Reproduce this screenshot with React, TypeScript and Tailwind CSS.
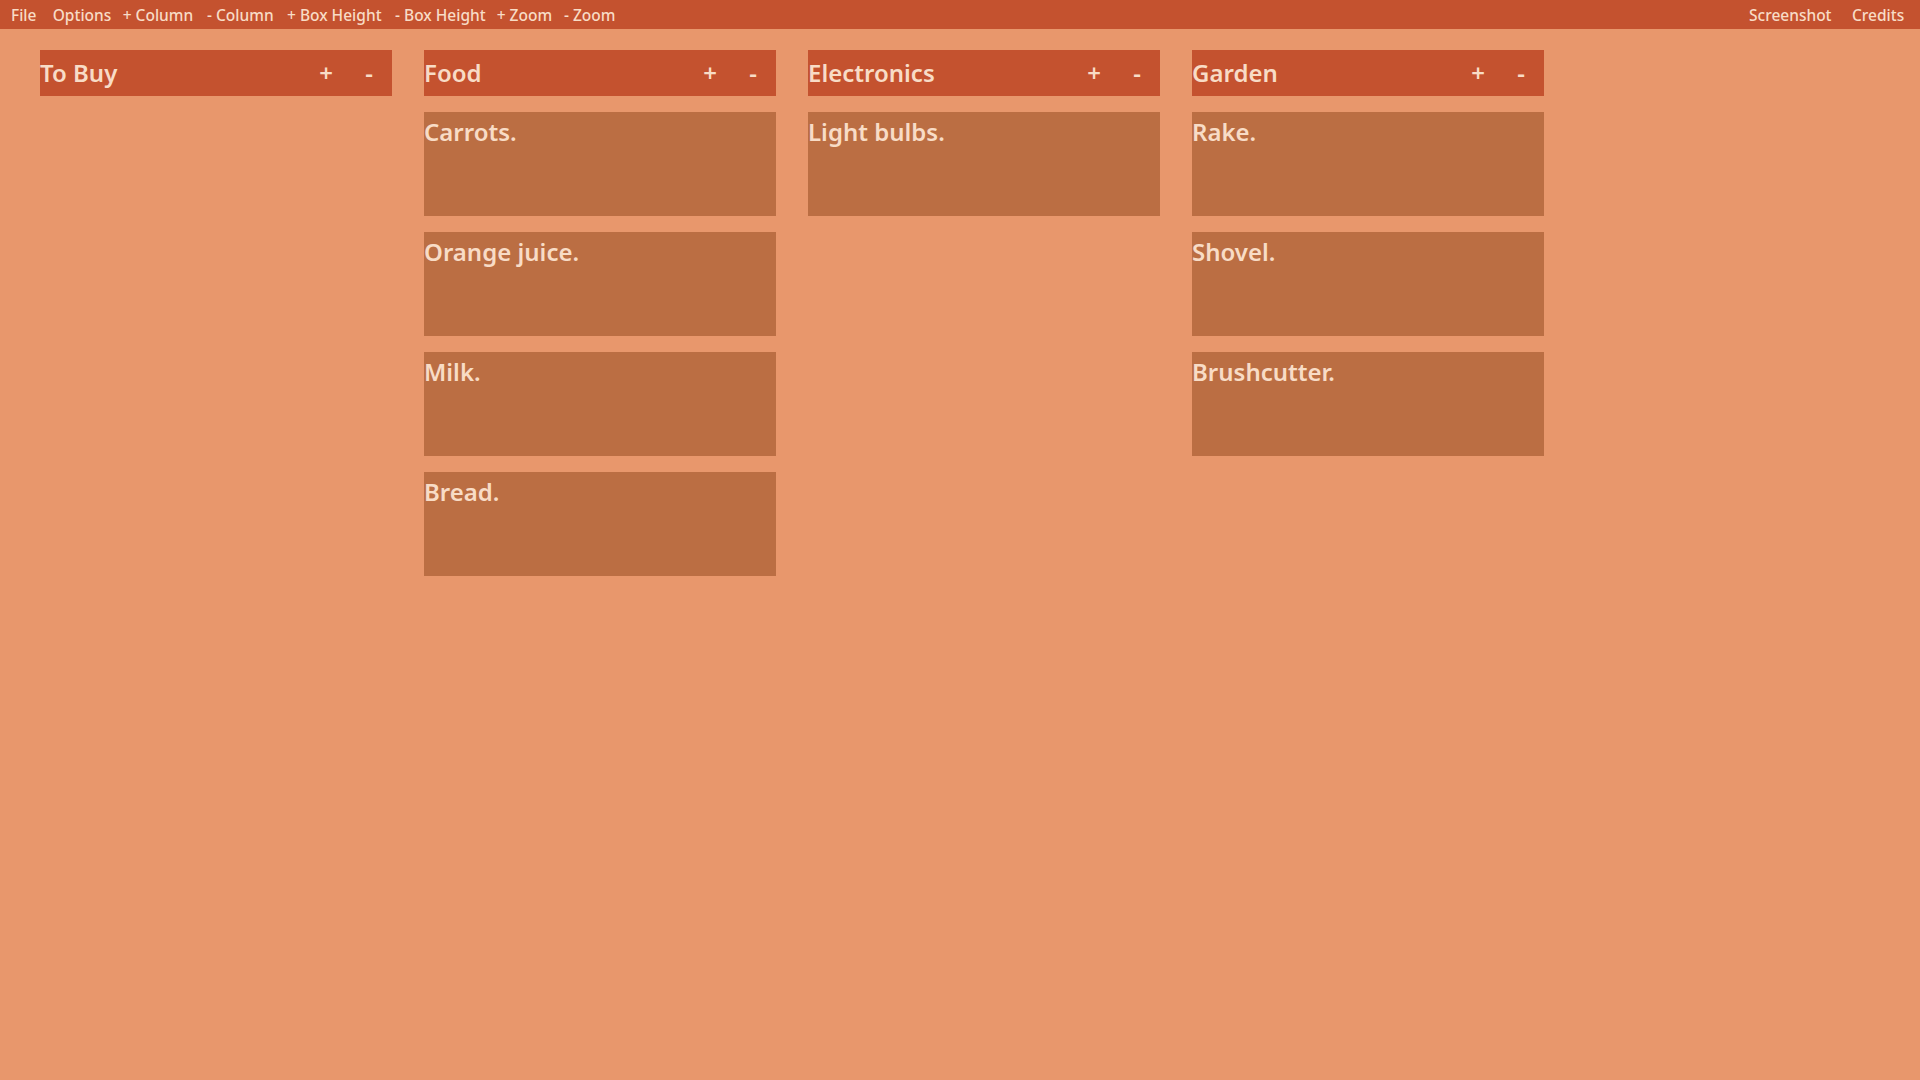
import React from "react";

const font = { fontFamily: '"Noto Sans", "Open Sans", sans-serif' };

const columns: { title: string; items: string[] }[] = [
  { title: "To Buy", items: [] },
  { title: "Food", items: ["Carrots.", "Orange juice.", "Milk.", "Bread."] },
  { title: "Electronics", items: ["Light bulbs."] },
  { title: "Garden", items: ["Rake.", "Shovel.", "Brushcutter."] },
];

export default function App() {
  return (
    <div
      className="w-[1920px] h-[1080px] bg-[#e8976c] text-[#f8dcc6] overflow-hidden flex flex-col font-semibold"
      style={font}
    >
      <div className="h-[29px] pt-[2px] bg-[#c4522f] flex items-center justify-between text-[15.5px] font-medium shrink-0">
        <div className="flex items-center pl-[11px]">
          <span className="w-[41.7px]">File</span>
          <span className="w-[70px]">Options</span>
          <span className="w-[84.3px]">+ Column</span>
          <span className="w-[80px]">- Column</span>
          <span className="w-[108px]">+ Box Height</span>
          <span className="w-[101.7px]">- Box Height</span>
          <span className="w-[67.3px]">+ Zoom</span>
          <span>- Zoom</span>
        </div>
        <div className="flex items-center">
          <span className="w-[103px]">Screenshot</span>
          <span className="w-[68px]">Credits</span>
        </div>
      </div>
      <div className="flex items-start gap-[32px] pl-[40px] pt-[21px]">
        {columns.map((col) => (
          <div key={col.title} className="w-[352px] flex flex-col gap-[16px]">
            <div className="h-[46px] bg-[#c4522f] flex items-center text-[24px]">
              <span className="flex-1">{col.title}</span>
              <span className="w-[40px] text-center">+</span>
              <span className="w-[46px] text-center">-</span>
            </div>
            {col.items.map((it) => (
              <div
                key={it}
                className="h-[104px] bg-[#bb6e43] text-[24px] pt-[2px] leading-normal"
              >
                {it}
              </div>
            ))}
          </div>
        ))}
      </div>
    </div>
  );
}
